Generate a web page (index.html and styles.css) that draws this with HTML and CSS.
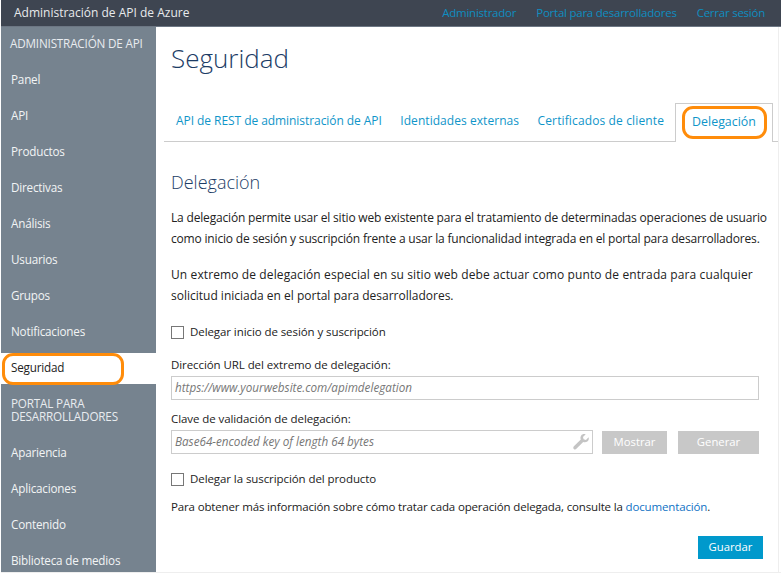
FILE: index.html
```html
<!DOCTYPE html>
<html lang="es">
<head>
<meta charset="utf-8">
<title>Seguridad</title>
<link rel="stylesheet" href="styles.css">
</head>
<body>
<header class="topbar">
  <span class="brand">Administración de API de Azure</span>
  <nav class="toplinks">
    <a>Administrador</a>
    <a>Portal para desarrolladores</a>
    <a>Cerrar sesión</a>
  </nav>
</header>
<div class="shell">
  <aside class="sidebar">
    <div class="side-head">ADMINISTRACIÓN DE API</div>
    <a class="side-item">Panel</a>
    <a class="side-item">API</a>
    <a class="side-item">Productos</a>
    <a class="side-item">Directivas</a>
    <a class="side-item">Análisis</a>
    <a class="side-item">Usuarios</a>
    <a class="side-item">Grupos</a>
    <a class="side-item">Notificaciones</a>
    <a class="side-item active">Seguridad</a>
    <div class="side-head second">PORTAL PARA DESARROLLADORES</div>
    <a class="side-item">Apariencia</a>
    <a class="side-item">Aplicaciones</a>
    <a class="side-item">Contenido</a>
    <a class="side-item">Biblioteca de medios</a>
  </aside>
  <main class="main">
    <h1 class="title">Seguridad</h1>
    <div class="tabs">
      <a class="tab tab-api">API de REST de administración de API</a>
      <a class="tab tab-ids">Identidades externas</a>
      <a class="tab tab-certs">Certificados de cliente</a>
      <a class="tab current">Delegación</a>
    </div>
    <section class="panel">
      <h2 class="subtitle">Delegación</h2>
      <p class="para">
        <span class="line tight">La delegación permite usar el sitio web existente para el tratamiento de determinadas operaciones de usuario</span>
        <span class="line tight">como inicio de sesión y suscripción frente a usar la funcionalidad integrada en el portal para desarrolladores.</span>
      </p>
      <p class="para">
        <span class="line loose">Un extremo de delegación especial en su sitio web debe actuar como punto de entrada para cualquier</span>
        <span class="line">solicitud iniciada en el portal para desarrolladores.</span>
      </p>
      <label class="check first"><span class="box"></span>Delegar inicio de sesión y suscripción</label>
      <div class="field-label">Dirección URL del extremo de delegación:</div>
      <div class="input">https://www.yourwebsite.com/apimdelegation</div>
      <div class="field-label">Clave de validación de delegación:</div>
      <div class="key-row">
        <div class="input key">Base64-encoded key of length 64 bytes
          <svg class="wrench" width="16" height="16" viewBox="0 0 16 16"><path d="M15.600 3.200l-2.700 2.700-2.300-.6-.6-2.300L12.700.300C10.900-.3 9 .2 8.200 1.500 7.300 2.800 7.200 4.200 7.800 5.500L.9 12.300c-.8.800-.8 1.900-.1 2.600.7.700 1.800.700 2.600-.1l6.800-6.900c1.300.6 2.800.5 4.100-.4 1.300-.9 1.800-2.600 1.300-4.300z" fill="#c4c4c4"/></svg>
        </div>
        <button class="btn off show">Mostrar</button>
        <button class="btn off gen">Generar</button>
      </div>
      <label class="check second"><span class="box"></span>Delegar la suscripción del producto</label>
      <p class="more">Para obtener más información sobre cómo tratar cada operación delegada, consulte la <a class="doc">documentación</a>.</p>
      <div class="actions"><button class="btn save">Guardar</button></div>
    </section>
  </main>
</div>
<span class="mark mark-side"></span>
<span class="mark mark-tab"></span>
</body>
</html>
```
FILE: styles.css
```css
* { box-sizing: border-box; }
html, body { margin: 0; height: 574px; overflow: hidden; }
body {
  position: relative;
  background: #fff;
  padding-left: 1px;
  font-family: "Open Sans", "Noto Sans", sans-serif;
  font-size: 12px;
  color: #222;
}
.topbar {
  height: 27px;
  background: #3e4551;
  border-bottom: 1px solid #6d7784;
  display: flex;
  justify-content: space-between;
  align-items: center;
  padding: 0 16px 1px 13px;
  color: #e8eaec;
}
.toplinks { display: flex; gap: 20px; color: #0f8dc0; font-size: 11.5px; letter-spacing: -0.24px; }
.shell { display: flex; height: 546px; border-bottom: 1px solid #eee; }
.sidebar {
  width: 155px;
  background: #76838f;
  color: #fff;
  flex: none;
  display: flex;
  flex-direction: column;
  overflow: hidden;
  font-size: 11.7px;
  letter-spacing: -0.2px;
}
.side-head { flex: none; padding: 9px 9px 0; height: 34px; line-height: 14px; color: #e9ecef; letter-spacing: -0.18px; white-space: nowrap; }
.side-head.second { height: 50px; padding: 13px 10px 0; line-height: 13px; white-space: normal; }
.side-item { height: 36px; line-height: 36px; padding-left: 10px; color: #f2f4f5; flex: none; }
.side-item:last-child { height: 30px; }
.side-item.active { background: #fff; color: #222; height: 31px; line-height: 29px; margin-top: 4px; }
.main { flex: 1; min-width: 0; margin-right: 2px; padding-left: 8px; border-right: 1px solid #eee; }
.title { margin: 0; padding: 13px 7px 0; height: 76px; font-size: 26px; line-height: 36px; font-weight: 300; color: #1c3c66; }
.tabs { display: flex; height: 39px; border-bottom: 1px solid #ccc; padding: 0 5px 0 12px; }
.tab { color: #0f95c9; line-height: 35px; margin-right: 18.500px; white-space: nowrap; flex: none; }
.tab-api { letter-spacing: -0.06px; }
.tab-ids { letter-spacing: 0.05px; }
.tab-certs { letter-spacing: 0.13px; margin-right: 0; }
.tab.current {
  margin: 0 0 0 auto;
  width: 98px;
  height: 39px;
  text-align: center;
  background: #fff;
  border: 1px solid #ccc;
  border-bottom: 0;
  font-size: 12.4px;
}
.panel { padding: 0 7px; }
.subtitle { margin: 0; padding-top: 25px; height: 65px; font-size: 18px; line-height: 30px; font-weight: 300; color: #1c3c66; }
.para { margin: 0 0 15px; line-height: 21px; }
.line { display: block; white-space: nowrap; }
.tight { letter-spacing: -0.18px; }
.loose { letter-spacing: 0.11px; }
.check { display: flex; align-items: center; gap: 6px; height: 18px; padding-bottom: 2px; font-size: 11.5px; letter-spacing: -0.08px; }
.check.first { margin-top: 17px; }
.box { width: 13px; height: 13px; margin-top: 2px; border: 1px solid #777; background: #fff; flex: none; }
.field-label { margin-top: 16px; height: 18px; line-height: 16px; font-size: 11.5px; letter-spacing: -0.08px; }
.field-label + .input { margin-top: 1px; }
.input {
  height: 24px;
  width: 588px;
  border: 1px solid #ccc;
  line-height: 20px;
  padding-left: 3px;
  font-style: italic;
  font-size: 11.7px;
  color: #777;
}
.input + .field-label { margin-top: 11px; }
.key-row { display: flex; align-items: flex-end; margin-top: 1px; }
.input.key { width: 422px; position: relative; }
.wrench { position: absolute; right: 3px; top: 3px; }
.btn { border: 0; font: inherit; font-size: 11.3px; height: 23px; color: #fff; padding: 0 0 2px; }
.off { background: #c8c8c8; }
.show { width: 65px; margin-left: 9px; }
.gen { width: 81px; margin-left: 11px; }
.check.second { margin-top: 16px; }
.more { margin: 11px 0 0; height: 18px; line-height: 16px; font-size: 11.5px; letter-spacing: -0.15px; white-space: nowrap; }
.doc { color: #0f72c4; }
.actions { display: flex; justify-content: flex-end; margin-top: 19px; width: 592px; }
.save { background: #0099cc; width: 65px; padding-bottom: 3px; }
.mark { position: absolute; border: 3px solid #ff8c0a; border-radius: 11px; }
.mark-side { left: 2px; top: 353px; width: 122px; height: 32px; }
.mark-tab { left: 682px; top: 106px; width: 85px; height: 33px; }
```
